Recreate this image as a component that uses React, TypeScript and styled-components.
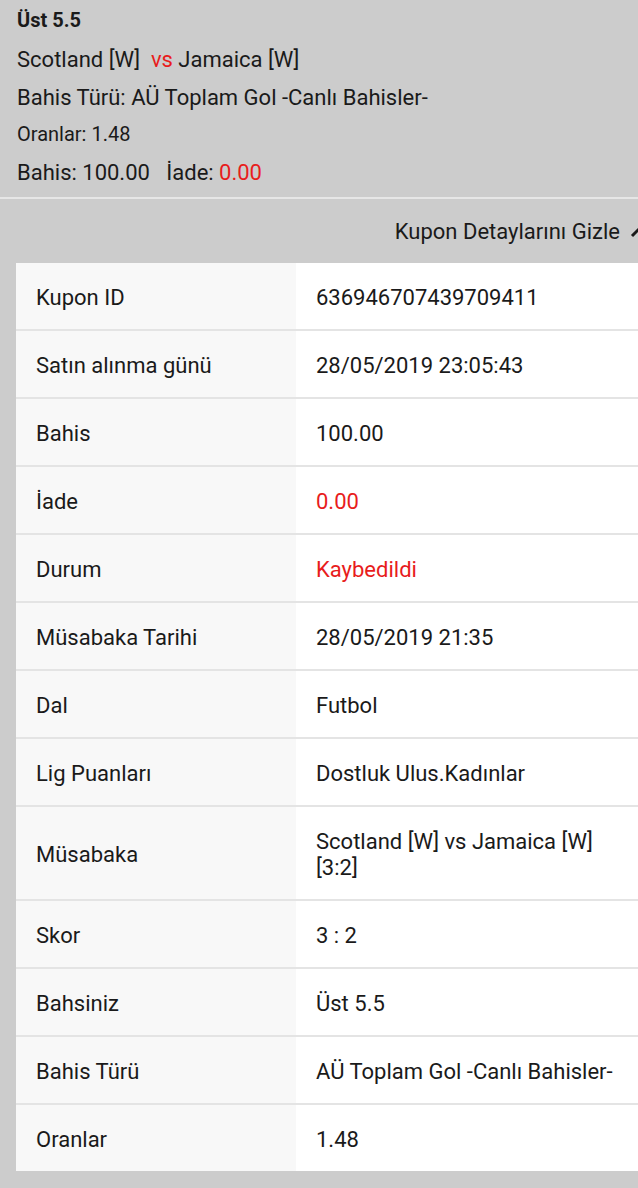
import React from 'react';
import styled, { createGlobalStyle } from 'styled-components';

const GlobalStyle = createGlobalStyle`
	html, body {
		margin: 0;
		padding: 0;
		overflow-x: hidden;
		background: #cccccc;
		font-family: Roboto, "Liberation Sans", sans-serif;
		color: #1a1a1a;
	}
`;

const Page = styled.div`
	width: 638px;
	background: #cccccc;
	padding-bottom: 14px;
`;

const Summary = styled.div`
	padding: 0 17px 3px;
	border-bottom: 2px solid #e6e6e6;
`;

const Title = styled.div`
	font-size: 20px;
	font-weight: 700;
	line-height: 40px;
`;

const Line = styled.div<{ $size?: number; $height?: number }>`
	font-size: ${(p) => p.$size || 22}px;
	line-height: ${(p) => p.$height || 36}px;
	white-space: nowrap;
`;

const Red = styled.span`
	color: #e81c1c;
`;

const Toggle = styled.div`
	height: 64px;
	display: flex;
	align-items: center;
	justify-content: flex-end;
	font-size: 22px;
	gap: 10px;
	margin-right: -14px;
`;

const Table = styled.div`
	margin-left: 16px;
	width: 624px;
	background: #ffffff;
`;

const Row = styled.div`
	display: grid;
	grid-template-columns: 280px 1fr;
	border-bottom: 2px solid #e4e4e4;

	&:last-child {
		border-bottom: none;
	}
`;

const Label = styled.div`
	display: flex;
	align-items: center;
	background: #f8f8f8;
	padding: 22px 20px 18px;
	font-size: 22px;
	line-height: 26px;
`;

const Value = styled.div<{ $red?: boolean }>`
	padding: 22px 20px 18px;
	font-size: 22px;
	line-height: 26px;
	color: ${(p) => (p.$red ? '#e81c1c' : '#1a1a1a')};
`;

const rows: { label: string; value: string; red?: boolean }[] = [
	{ label: 'Kupon ID', value: '636946707439709411' },
	{ label: 'Satın alınma günü', value: '28/05/2019 23:05:43' },
	{ label: 'Bahis', value: '100.00' },
	{ label: 'İade', value: '0.00', red: true },
	{ label: 'Durum', value: 'Kaybedildi', red: true },
	{ label: 'Müsabaka Tarihi', value: '28/05/2019 21:35' },
	{ label: 'Dal', value: 'Futbol' },
	{ label: 'Lig Puanları', value: 'Dostluk Ulus.Kadınlar' },
	{ label: 'Müsabaka', value: 'Scotland [W] vs Jamaica [W] [3:2]' },
	{ label: 'Skor', value: '3 : 2' },
	{ label: 'Bahsiniz', value: 'Üst 5.5' },
	{ label: 'Bahis Türü', value: 'AÜ Toplam Gol -Canlı Bahisler-' },
	{ label: 'Oranlar', value: '1.48' },
];

function App() {
	return (
		<Page>
			<GlobalStyle />
			<Summary>
				<Title>Üst 5.5</Title>
				<Line $height={40}>
					Scotland [W] &nbsp;<Red>vs</Red> Jamaica [W]
				</Line>
				<Line $height={36}>Bahis Türü: AÜ Toplam Gol -Canlı Bahisler-</Line>
				<Line $size={20} $height={36}>
					Oranlar: 1.48
				</Line>
				<Line $height={42}>
					Bahis: 100.00 &nbsp; İade: <Red>0.00</Red>
				</Line>
			</Summary>
			<Toggle>
				<span>Kupon Detaylarını Gizle</span>
				<svg width="22" height="14" viewBox="0 0 22 14">
					<path d="M2 12 L11 3 L20 12" fill="none" stroke="#1a1a1a" strokeWidth="3" />
				</svg>
			</Toggle>
			<Table>
				{rows.map((r) => (
					<Row key={r.label}>
						<Label>{r.label}</Label>
						<Value $red={r.red}>{r.value}</Value>
					</Row>
				))}
			</Table>
		</Page>
	);
}

export default App;
